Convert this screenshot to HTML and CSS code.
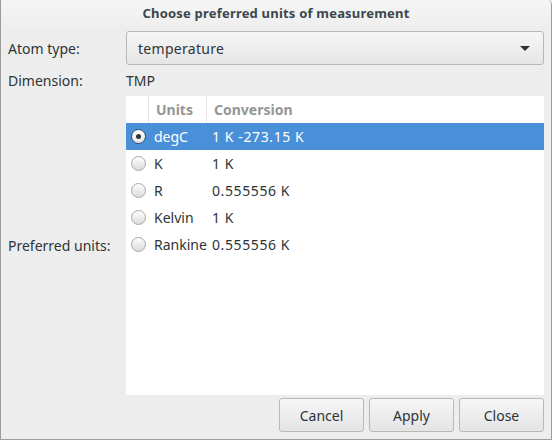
FILE: index.html
```html
<!DOCTYPE html>
<html>
<head>
<meta charset="utf-8">
<link rel="stylesheet" href="styles.css">
</head>
<body>
<div class="window">
  <div class="titlebar">Choose preferred units of measurement</div>
  <div class="content">
    <div class="label row-combo">Atom type:</div>
    <div class="combo">
      <span>temperature</span>
      <span class="arrow"></span>
    </div>
    <div class="label row-dim">Dimension:</div>
    <div class="value row-dim">TMP</div>
    <div class="label row-tree">Preferred units:</div>
    <div class="tree">
      <div class="thead">
        <div class="c-radio hcell"></div>
        <div class="c-units hcell">Units</div>
        <div class="c-conv hcell">Conversion</div>
      </div>
      <div class="trow selected">
        <div class="c-radio"><span class="radio on"></span></div>
        <div class="c-units">degC</div>
        <div class="c-conv num">1 K -273.15 K</div>
      </div>
      <div class="trow">
        <div class="c-radio"><span class="radio"></span></div>
        <div class="c-units">K</div>
        <div class="c-conv num">1 K</div>
      </div>
      <div class="trow">
        <div class="c-radio"><span class="radio"></span></div>
        <div class="c-units">R</div>
        <div class="c-conv num">0.555556 K</div>
      </div>
      <div class="trow">
        <div class="c-radio"><span class="radio"></span></div>
        <div class="c-units">Kelvin</div>
        <div class="c-conv num">1 K</div>
      </div>
      <div class="trow">
        <div class="c-radio"><span class="radio"></span></div>
        <div class="c-units">Rankine</div>
        <div class="c-conv num">0.555556 K</div>
      </div>
    </div>
  </div>
  <div class="buttons">
    <button class="btn">Cancel</button>
    <button class="btn">Apply</button>
    <button class="btn">Close</button>
  </div>
</div>
</body>
</html>
```
FILE: styles.css
```css
html, body {
  margin: 0;
  padding: 0;
  background: #ededed;
}
body {
  font-family: "Noto Sans", "DejaVu Sans", sans-serif;
  font-size: 14px;
  color: #2e3436;
}
.window {
  width: 550px;
  height: 439px;
  border: 1px solid #9c9c9c;
  border-top: none;
  border-top-right-radius: 5px;
  background: #ededed;
  display: flex;
  flex-direction: column;
  overflow: hidden;
}
.titlebar {
  height: 26px;
  line-height: 26px;
  text-align: center;
  font-weight: bold;
  font-size: 13px;
  letter-spacing: 0.2px;
  color: #3b474c;
  background: linear-gradient(#f5f5f5, #efefef);
  flex: none;
}
.content {
  display: grid;
  grid-template-columns: 118px 418px;
  grid-template-rows: 34px 31px 299px;
  padding: 5px 7px 0 7px;
}
.label {
  display: flex;
  align-items: center;
}
.combo {
  box-sizing: border-box;
  height: 34px;
  border: 1px solid #b8b8b5;
  border-radius: 3px;
  background: linear-gradient(#f6f6f6, #e6e6e6);
  display: flex;
  align-items: center;
  justify-content: space-between;
  padding: 0 11px 0 11px;
  letter-spacing: 0.3px;
}
.arrow {
  width: 0;
  height: 0;
  border-left: 5px solid transparent;
  border-right: 5px solid transparent;
  border-top: 5px solid #2e3436;
  margin-right: 2px;
}
.value {
  display: flex;
  align-items: center;
}
.tree {
  background: #ffffff;
  display: flex;
  flex-direction: column;
}
.thead, .trow {
  display: flex;
  height: 27px;
  align-items: stretch;
}
.thead {
  color: #939697;
  font-weight: bold;
}
.thead .hcell {
  border-right: 1px solid #e3e3e3;
  display: flex;
  align-items: center;
}
.thead .c-units { padding-left: 7px; }
.thead .c-conv { border-right: none; padding-left: 7px; }
.c-radio {
  width: 23px;
  flex: none;
  box-sizing: border-box;
  display: flex;
  align-items: center;
  justify-content: center;
}
.c-units {
  width: 58px;
  flex: none;
  box-sizing: border-box;
  padding-left: 5px;
  display: flex;
  align-items: center;
}
.c-conv {
  flex: 1;
  box-sizing: border-box;
  padding-left: 5px;
  display: flex;
  align-items: center;
}
.num {
  letter-spacing: 0.6px;
}
.trow.selected {
  background: #4a90d9;
  color: #ffffff;
}
.radio {
  box-sizing: border-box;
  width: 15px;
  height: 15px;
  border-radius: 50%;
  border: 1px solid #a7a7a7;
  background: linear-gradient(#fdfdfd, #dcdcdc);
  display: flex;
  align-items: center;
  justify-content: center;
  margin-left: 1px;
}
.radio.on {
  border-color: #2f4f70;
  background: linear-gradient(#ffffff, #e4e4e4);
}
.radio.on::after {
  content: "";
  width: 5px;
  height: 5px;
  border-radius: 50%;
  background: #2e3436;
}
.buttons {
  display: flex;
  justify-content: flex-end;
  gap: 5px;
  padding: 3px 7px 0 0;
}
.btn {
  box-sizing: border-box;
  width: 85px;
  height: 34px;
  border: 1px solid #b8b8b5;
  border-radius: 3px;
  background: linear-gradient(#f6f6f6, #e4e4e4);
  font-family: "Noto Sans", "DejaVu Sans", sans-serif;
  font-size: 14px;
  color: #2e3436;
  padding: 0;
}
```
